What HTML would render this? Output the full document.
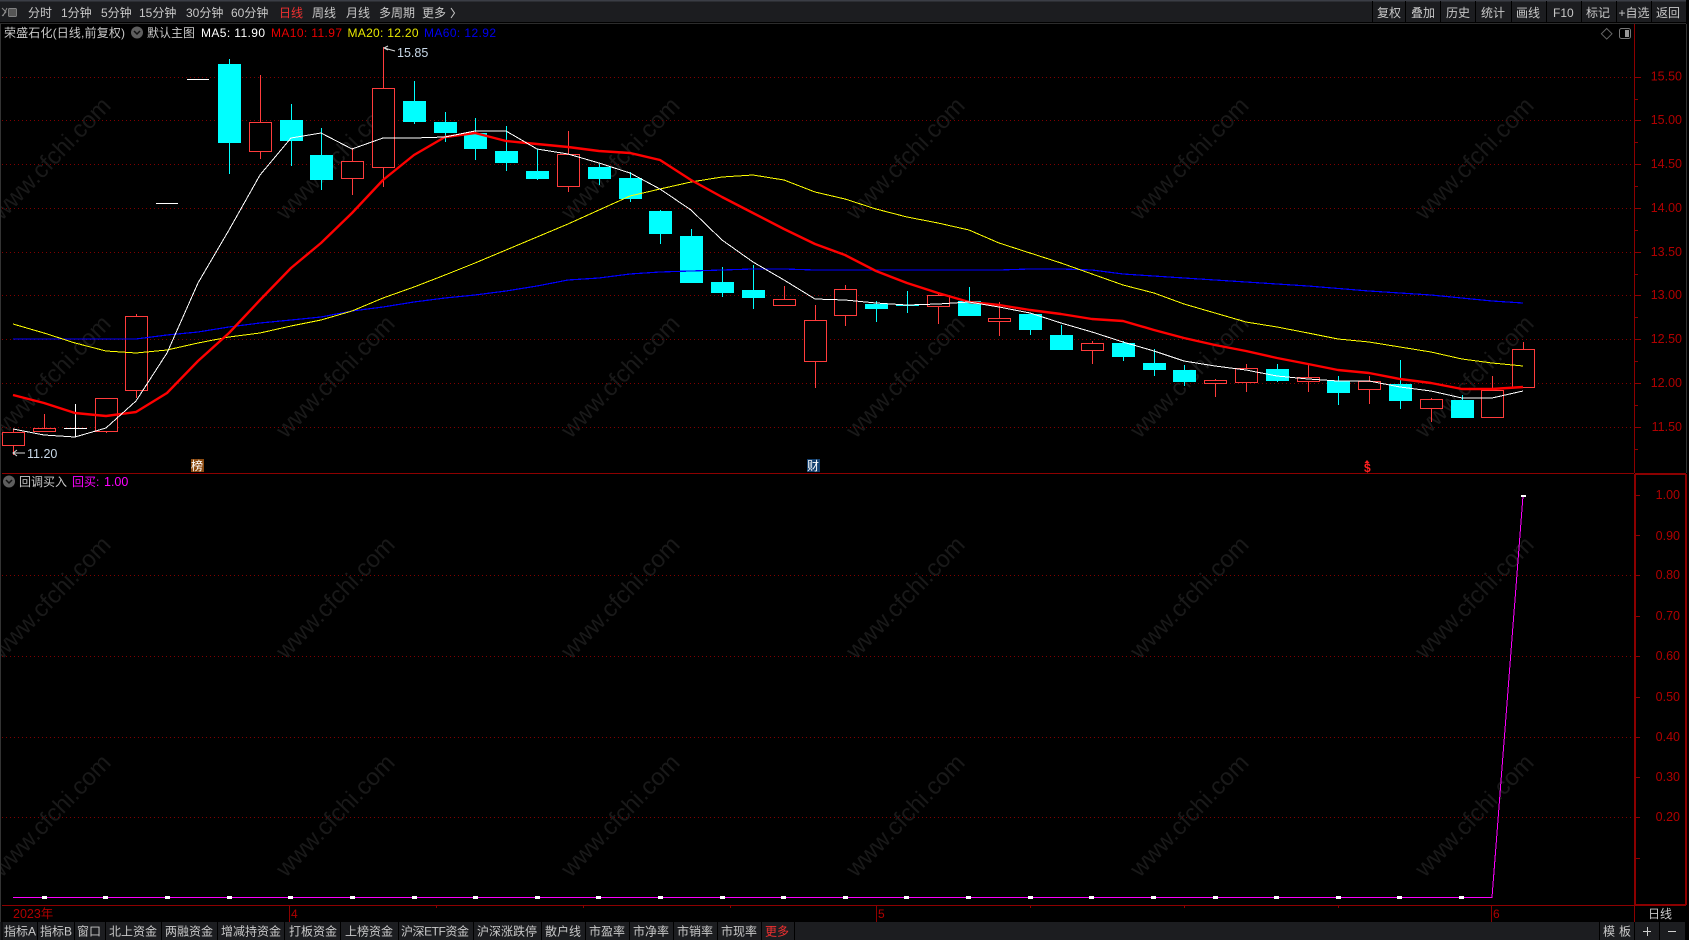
<!DOCTYPE html>
<html lang="zh">
<head>
<meta charset="utf-8">
<title>荣盛石化</title>
<style>
html,body{margin:0;padding:0;background:#000;width:1689px;height:940px;overflow:hidden}
svg{display:block}
text{font-family:"Liberation Sans","Noto Sans CJK SC",sans-serif;font-size:12px;fill:#c8c8c8}
.wm text{font-size:24px;fill:#191919}
.ax text{fill:#b00000;text-anchor:end;font-size:12.5px}
.cr{shape-rendering:crispEdges}
</style>
</head>
<body>
<svg width="1689" height="940" viewBox="0 0 1689 940" xmlns="http://www.w3.org/2000/svg">
<rect width="1689" height="940" fill="#000"/>

<!-- watermark -->
<g class="wm">
<text text-anchor="middle" transform="translate(57,164) rotate(-46)">www.cfchi.com</text>
<text text-anchor="middle" transform="translate(341,164) rotate(-46)">www.cfchi.com</text>
<text text-anchor="middle" transform="translate(626,164) rotate(-46)">www.cfchi.com</text>
<text text-anchor="middle" transform="translate(911,164) rotate(-46)">www.cfchi.com</text>
<text text-anchor="middle" transform="translate(1195,164) rotate(-46)">www.cfchi.com</text>
<text text-anchor="middle" transform="translate(1480,164) rotate(-46)">www.cfchi.com</text>
<text text-anchor="middle" transform="translate(57,382) rotate(-46)">www.cfchi.com</text>
<text text-anchor="middle" transform="translate(341,382) rotate(-46)">www.cfchi.com</text>
<text text-anchor="middle" transform="translate(626,382) rotate(-46)">www.cfchi.com</text>
<text text-anchor="middle" transform="translate(911,382) rotate(-46)">www.cfchi.com</text>
<text text-anchor="middle" transform="translate(1195,382) rotate(-46)">www.cfchi.com</text>
<text text-anchor="middle" transform="translate(1480,382) rotate(-46)">www.cfchi.com</text>
<text text-anchor="middle" transform="translate(57,603) rotate(-46)">www.cfchi.com</text>
<text text-anchor="middle" transform="translate(341,603) rotate(-46)">www.cfchi.com</text>
<text text-anchor="middle" transform="translate(626,603) rotate(-46)">www.cfchi.com</text>
<text text-anchor="middle" transform="translate(911,603) rotate(-46)">www.cfchi.com</text>
<text text-anchor="middle" transform="translate(1195,603) rotate(-46)">www.cfchi.com</text>
<text text-anchor="middle" transform="translate(1480,603) rotate(-46)">www.cfchi.com</text>
<text text-anchor="middle" transform="translate(57,821) rotate(-46)">www.cfchi.com</text>
<text text-anchor="middle" transform="translate(341,821) rotate(-46)">www.cfchi.com</text>
<text text-anchor="middle" transform="translate(626,821) rotate(-46)">www.cfchi.com</text>
<text text-anchor="middle" transform="translate(911,821) rotate(-46)">www.cfchi.com</text>
<text text-anchor="middle" transform="translate(1195,821) rotate(-46)">www.cfchi.com</text>
<text text-anchor="middle" transform="translate(1480,821) rotate(-46)">www.cfchi.com</text>
</g>

<!-- grid -->
<path class="cr" fill="none" stroke="#800000" stroke-width="1" stroke-dasharray="1 3" d="M2 77.5H1634M2 120.5H1634M2 164.5H1634M2 208.5H1634M2 252.5H1634M2 295.5H1634M2 339.5H1634M2 383.5H1634M2 427.5H1634M2 575.5H1634M2 656.5H1634M2 737.5H1634M2 817.5H1634"/>

<!-- candles: red -->
<path class="cr" fill="none" stroke="#ff3c3c" d="M13.5 429V432M13.5 446V455M44.5 414V428M106.5 432V433M136.5 314V316M136.5 391V398M260.5 75V122M260.5 152V159M352.5 148V161M352.5 179V195M383.5 47V88M383.5 168V187M568.5 131V154M568.5 187V192M784.5 286V299M815.5 305V320M815.5 362V388M845.5 285V289M845.5 316V326M938.5 293V295M938.5 307V324M999.5 302V318M999.5 322V336M1092.5 341V343M1092.5 351V364M1215.5 379V380M1215.5 384V397M1246.5 364V368M1246.5 383V392M1308.5 365V377M1308.5 382V392M1369.5 376V381M1369.5 390V404M1431.5 398V399M1431.5 409V422M1492.5 376V390M1523.5 342V349"/>
<path class="cr" fill="#000" stroke="#ff3c3c" d="M2.5 432.5h22v13h-22zM33.5 428.5h22v3h-22zM95.5 398.5h22v33h-22zM125.5 316.5h22v74h-22zM249.5 122.5h22v29h-22zM341.5 161.5h22v17h-22zM372.5 88.5h22v79h-22zM557.5 154.5h22v32h-22zM773.5 299.5h22v6h-22zM804.5 320.5h22v41h-22zM834.5 289.5h22v26h-22zM927.5 295.5h22v11h-22zM988.5 318.5h22v3h-22zM1081.5 343.5h22v7h-22zM1204.5 380.5h22v3h-22zM1235.5 368.5h22v14h-22zM1297.5 377.5h22v4h-22zM1358.5 381.5h22v8h-22zM1420.5 399.5h22v9h-22zM1481.5 390.5h22v27h-22zM1512.5 349.5h22v38h-22z"/>

<!-- candles: cyan -->
<path class="cr" fill="none" stroke="#00ffff" d="M229.5 59V174M291.5 104V166M321.5 128V190M414.5 81V124M445.5 112V142M475.5 118V160M506.5 126V171M537.5 149V180M599.5 164V185M630.5 172V202M660.5 210V244M691.5 229V283M722.5 267V297M753.5 265V309M876.5 301V322M907.5 291V313M969.5 287V316M1030.5 314V335M1061.5 325V350M1123.5 341V361M1154.5 349V376M1184.5 365V386M1277.5 364V382M1338.5 376V405M1400.5 360V409M1462.5 395V418"/>
<path class="cr" fill="#00ffff" d="M218 64h23v79h-23zM280 120h23v21h-23zM310 155h23v25h-23zM403 101h23v21h-23zM434 122h23v11h-23zM464 133h23v16h-23zM495 151h23v12h-23zM526 171h23v8h-23zM588 167h23v12h-23zM619 178h23v21h-23zM649 211h23v23h-23zM680 236h23v47h-23zM711 282h23v11h-23zM742 290h23v8h-23zM865 304h23v5h-23zM896 305h23v1h-23zM958 301h23v15h-23zM1019 314h23v16h-23zM1050 335h23v15h-23zM1112 343h23v14h-23zM1143 363h23v7h-23zM1173 370h23v12h-23zM1266 369h23v12h-23zM1327 381h23v12h-23zM1389 384h23v17h-23zM1451 400h23v18h-23z"/>

<!-- candles: white doji -->
<path class="cr" fill="none" stroke="#fff" d="M64 428.5H87M75.5 404V437M156 203.5H178M187 79.5H209"/>

<!-- MA60 -->
<polyline class="cr" fill="none" stroke="#0000ff" stroke-width="1.2" points="13,339 44,339 75,339 106,339 136,339 167,335 198,332 229,327 260,323 291,320 321,317 352,311 383,307 414,302 445,298 475,295 506,291 537,286 568,280 599,278 630,274 660,272 691,271 722,270 753,269 784,269 815,270 845,270 876,270 907,270 938,270 969,270 999,270 1030,269 1061,269 1092,270 1123,274 1184,278 1246,282 1308,286 1369,291 1431,295 1492,301 1523,303"/>
<!-- MA20 -->
<polyline class="cr" fill="none" stroke="#ffff00" stroke-width="1" points="13,324 44,333 75,343 106,351 136,353 167,350 198,343 229,337 260,333 291,326 321,320 352,311 383,298 414,287 445,275 475,263 506,250 537,237 568,224 599,210 630,196 660,189 691,182 722,177 753,175 784,180 815,192 845,199 876,209 907,217 938,223 969,230 999,243 1030,253 1061,263 1092,274 1123,285 1154,293 1184,304 1215,313 1246,322 1277,327 1308,333 1338,339 1369,342 1400,347 1431,352 1462,359 1492,363 1523,366"/>
<!-- MA10 -->
<polyline fill="none" stroke="#ff0000" stroke-width="2.4" stroke-linejoin="round" points="13,395 44,403 75,413 106,416 136,412 167,393 198,361 229,333 260,300 291,268 321,243 352,213 383,180 414,155 445,137 475,133 506,141 537,144 568,147 599,151 630,153 660,160 691,180 722,197 753,213 784,229 815,244 845,255 876,271 907,283 938,293 969,302 999,305 1030,310 1061,314 1092,319 1123,321 1154,330 1184,338 1215,345 1246,351 1277,358 1308,364 1338,370 1369,373 1400,379 1431,383 1462,389 1492,389 1523,387"/>
<!-- MA5 -->
<polyline class="cr" fill="none" stroke="#ffffff" stroke-width="1" points="13,429 44,435 75,437 106,428 136,401 167,353 198,283 229,230 260,175 291,138 321,133 352,149 383,138 414,138 445,137 475,131 506,131 537,149 568,154 599,163 630,173 660,189 691,210 722,240 753,262 784,280 815,299 845,300 876,303 907,305 938,304 969,302 999,307 1030,313 1061,323 1092,332 1123,342 1154,351 1184,361 1215,366 1246,370 1277,376 1308,379 1338,381 1369,381 1400,387 1431,391 1462,398 1492,398 1523,391"/>

<!-- annotations -->
<path fill="none" stroke="#d8d8d8" d="M388 46l-4 2 4 2M384 48L395 51"/>
<text x="397" y="57" style="fill:#c8d8e8;font-size:12.5px">15.85</text>
<path fill="none" stroke="#d8d8d8" d="M17 450l-4 3 4 3M13 453H25"/>
<text x="27" y="458" style="fill:#c8d8e8;font-size:12.5px">11.20</text>

<rect x="191" y="459" width="13" height="13" fill="#8b4a10"/>
<text x="191" y="470" style="fill:#fff">榜</text>
<rect x="807" y="459" width="13" height="13" fill="#14406e"/>
<text x="807" y="470" style="fill:#fff">财</text>
<text x="1364" y="472" style="fill:#ff2020;font-weight:bold;font-size:12px">$</text>
<path fill="#ff2020" d="M1367 460l2.5 3h-5z"/>

<!-- lower indicator -->
<polyline class="cr" fill="none" stroke="#ff00ff" stroke-width="1" points="13,897.5 1492,897.5 1523,496"/>
<path class="cr" fill="#ffffff" d="M42 896h5v3h-5zM103 896h5v3h-5zM165 896h5v3h-5zM227 896h5v3h-5zM288 896h5v3h-5zM350 896h5v3h-5zM412 896h5v3h-5zM473 896h5v3h-5zM535 896h5v3h-5zM596 896h5v3h-5zM658 896h5v3h-5zM720 896h5v3h-5zM781 896h5v3h-5zM843 896h5v3h-5zM904 896h5v3h-5zM966 896h5v3h-5zM1028 896h5v3h-5zM1089 896h5v3h-5zM1151 896h5v3h-5zM1213 896h5v3h-5zM1274 896h5v3h-5zM1336 896h5v3h-5zM1397 896h5v3h-5zM1459 896h5v3h-5zM1521 495h5v2h-5z"/>

<!-- frame and axes -->
<path class="cr" fill="none" stroke="#8c0000" d="M2 473.5H1634M2 905.5H1634M1634.5 23V473M1634.5 905V922"/>
<path class="cr" fill="none" stroke="#8c0000" stroke-width="2" d="M1635 474H1686M1686 474V905M1635 474V905M1635 905H1686"/>
<path class="cr" fill="none" stroke="#333" d="M0.5 23V940M1686.5 24V473"/>
<path class="cr" fill="none" stroke="#8c0000" d="M1635 77.5h6M1635 99.5h3M1635 120.5h6M1635 142.5h3M1635 164.5h6M1635 186.5h3M1635 208.5h6M1635 230.5h3M1635 252.5h6M1635 274.5h3M1635 295.5h6M1635 317.5h3M1635 339.5h6M1635 361.5h3M1635 383.5h6M1635 405.5h3M1635 427.5h6M1635 449.5h3M1636 495.5h4M1636 535.5h4M1636 575.5h4M1636 616.5h4M1636 656.5h4M1636 697.5h4M1636 737.5h4M1636 777.5h4M1636 817.5h4M1636 858.5h4"/>
<path class="cr" fill="none" stroke="#8c0000" d="M289.5 905V922M876.5 905V922M1491.5 905V922M436.5 906v2M583.5 906v2M730.5 906v2M1030.5 906v2M1184.5 906v2M1338.5 906v2"/>
<g class="ax">
<text x="1682" y="80.5">15.50</text>
<text x="1682" y="124">15.00</text>
<text x="1682" y="168">14.50</text>
<text x="1682" y="212">14.00</text>
<text x="1682" y="256">13.50</text>
<text x="1682" y="299">13.00</text>
<text x="1682" y="343">12.50</text>
<text x="1682" y="387">12.00</text>
<text x="1682" y="431">11.50</text>
<text x="1680" y="499">1.00</text>
<text x="1680" y="540">0.90</text>
<text x="1680" y="579">0.80</text>
<text x="1680" y="620">0.70</text>
<text x="1680" y="660">0.60</text>
<text x="1680" y="701">0.50</text>
<text x="1680" y="741">0.40</text>
<text x="1680" y="781">0.30</text>
<text x="1680" y="821">0.20</text>
</g>
<text x="13" y="918" style="fill:#b00000;font-size:12.5px">2023年</text>
<text x="291" y="918" style="fill:#b00000">4</text>
<text x="878" y="918" style="fill:#b00000">5</text>
<text x="1493" y="918" style="fill:#b00000">6</text>
<text x="1648" y="918">日线</text>

<!-- top toolbar -->
<rect width="1689" height="22" fill="#1c1d20"/>
<rect width="1689" height="1.5" fill="#3b3e46"/>
<rect y="23" width="1686" height="1" fill="#2c2c2c"/>
<rect x="1686" width="3" height="24" fill="#000"/>
<path fill="none" stroke="#8a8a8a" stroke-width="1" d="M2 8l4 4-4 4M7 8l-4 8"/>
<rect x="8.5" y="8.5" width="8" height="8" rx="1" fill="#555" stroke="#999" stroke-width="0.7"/>
<text x="28" y="17">分时</text>
<text x="61" y="17">1分钟</text>
<text x="101" y="17">5分钟</text>
<text x="139" y="17">15分钟</text>
<text x="186" y="17">30分钟</text>
<text x="231" y="17">60分钟</text>
<text x="279" y="17" style="fill:#f03030">日线</text>
<text x="312" y="17">周线</text>
<text x="346" y="17">月线</text>
<text x="379" y="17">多周期</text>
<text x="422" y="17">更多</text>
<path fill="none" stroke="#c8c8c8" d="M451 8l3.5 5-3.5 5"/>
<path class="cr" stroke="#000" d="M1372.5 1V22M1405.5 1V22M1440.5 1V22M1475.5 1V22M1511.5 1V22M1546.5 1V22M1581.5 1V22M1616.5 1V22M1651.5 1V22"/>
<text x="1377" y="17">复权</text>
<text x="1411" y="17">叠加</text>
<text x="1446" y="17">历史</text>
<text x="1481" y="17">统计</text>
<text x="1516" y="17">画线</text>
<text x="1553" y="17">F10</text>
<text x="1586" y="17">标记</text>
<text x="1618.5" y="17">+自选</text>
<text x="1656" y="17">返回</text>

<!-- info line -->
<text x="4" y="37" textLength="121">荣盛石化(日线,前复权)</text>
<circle cx="137" cy="32.5" r="6" fill="#5e5e5e"/>
<path fill="none" stroke="#111" stroke-width="1.5" d="M134 31l3 3 3-3"/>
<text x="147" y="37">默认主图</text>
<text x="201" y="37" textLength="64" style="fill:#ffffff">MA5: 11.90</text>
<text x="271" y="37" textLength="71" style="fill:#e80000">MA10: 11.97</text>
<text x="347.5" y="37" textLength="71" style="fill:#e8e800">MA20: 12.20</text>
<text x="424" y="37" textLength="72" style="fill:#0000f0">MA60: 12.92</text>
<path fill="none" stroke="#666" d="M1606.7 28.5l5.3 5.3-5.3 5.3-5.3-5.3z"/>
<rect x="1619.5" y="28.5" width="11" height="10" rx="2" fill="none" stroke="#777"/>
<rect x="1625" y="30" width="4" height="7" fill="#999"/>

<!-- lower header -->
<circle cx="9" cy="481.5" r="6" fill="#5e5e5e"/>
<path fill="none" stroke="#111" stroke-width="1.5" d="M6 480l3 3 3-3"/>
<text x="19" y="486">回调买入</text>
<text x="72" y="486" style="fill:#ff00ff">回买:</text>
<text x="104" y="486" style="fill:#ff00ff;font-size:12.5px">1.00</text>

<!-- bottom bar -->
<rect y="922" width="1685" height="18" fill="#1c1d20"/>
<path class="cr" stroke="#000" stroke-width="1.4" d="M2 922V940M37.5 922V940M74.5 922V940M105.5 922V940M161.5 922V940M217.5 922V940M284.5 922V940M340.5 922V940M398.5 922V940M473.5 922V940M541.5 922V940M585.5 922V940M629.5 922V940M673.5 922V940M717.5 922V940M761.5 922V940M794.5 922V940M1599.5 922V940M1634.5 922V940M1659.5 922V940"/>
<text x="4" y="935.5">指标A</text>
<text x="40" y="935.5">指标B</text>
<text x="77" y="935.5">窗口</text>
<text x="109" y="935.5">北上资金</text>
<text x="165" y="935.5">两融资金</text>
<text x="221" y="935.5">增减持资金</text>
<text x="289" y="935.5">打板资金</text>
<text x="345" y="935.5">上榜资金</text>
<text x="401" y="935.5" textLength="68">沪深ETF资金</text>
<text x="477" y="935.5">沪深涨跌停</text>
<text x="545" y="935.5">散户线</text>
<text x="589" y="935.5">市盈率</text>
<text x="633" y="935.5">市净率</text>
<text x="677" y="935.5">市销率</text>
<text x="721" y="935.5">市现率</text>
<text x="765" y="935.5" style="fill:#f03030">更多</text>
<text x="1603" y="935.5" textLength="28">模板</text>
<path class="cr" stroke="#d0d0d0" fill="none" d="M1643 931.5h8M1647.5 927v9M1668 931.5h8"/>
</svg>
</body>
</html>
